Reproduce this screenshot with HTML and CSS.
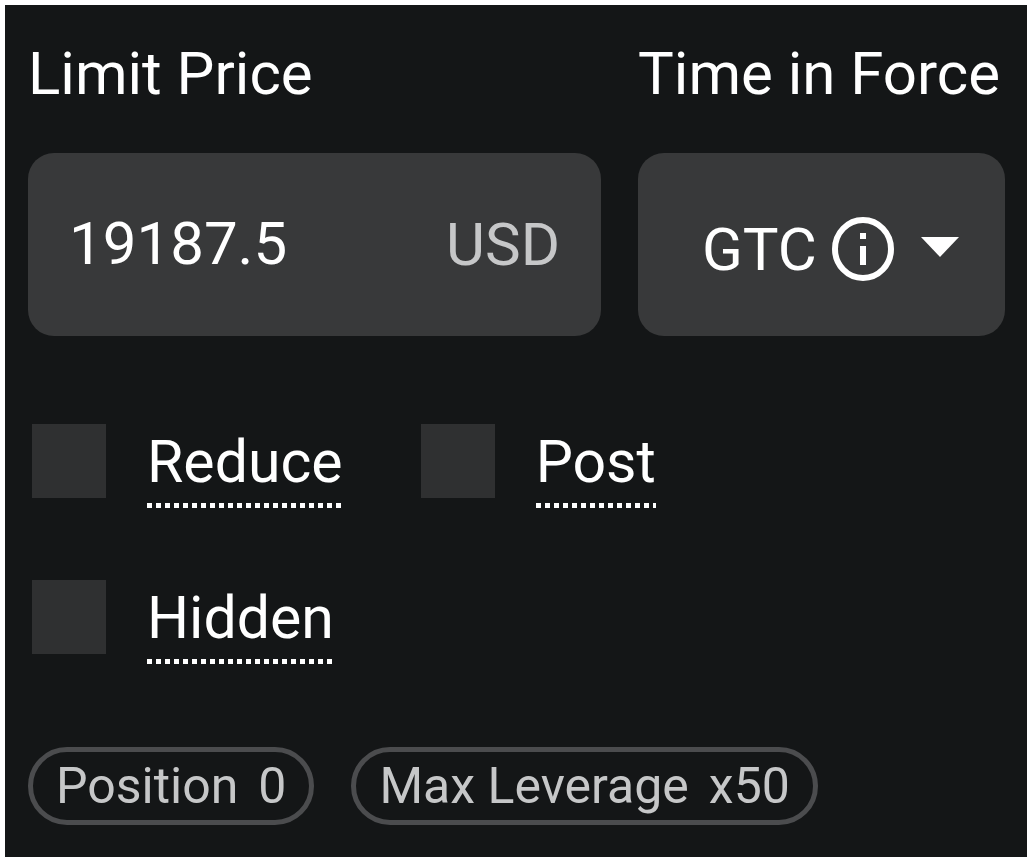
FILE: index.html
```
<!DOCTYPE html>
<html lang="en">
<head>
    <meta charset="UTF-8">
    <meta name="viewport" content="width=device-width, initial-scale=1.0">
    <title>Limit Order</title>
    <link rel="stylesheet" href="styles.css">
</head>
<body>

    <form class="order-panel">
        <div class="fields">
            <div class="field">
                <label for="price">Limit Price</label>
                <div class="field-box">
                    <input type="text" id="price" name="price" value="19187.5" inputmode="decimal">
                    <span class="unit">USD</span>
                </div>
            </div>

            <div class="field">
                <label for="tif">Time in Force</label>
                <div class="select-box">
                    <select id="tif" name="tif">
                        <option selected>GTC</option>
                        <option>IOC</option>
                        <option>FOK</option>
                    </select>
                    <div class="select-icons">
                        <svg class="info-icon" viewBox="0 0 62 64" aria-hidden="true">
                            <ellipse cx="31" cy="32" rx="28" ry="29" fill="none" stroke="#fff" stroke-width="6"/>
                            <path d="M28 16h6v6h-6zM28 29h6v19h-6z" fill="#fff"/>
                        </svg>
                        <svg class="arrow-icon" viewBox="0 0 38 20" aria-hidden="true">
                            <path d="M0 0h38L19 20z" fill="#fff"/>
                        </svg>
                    </div>
                </div>
            </div>
        </div>

        <div class="options">
            <div class="option">
                <input type="checkbox" id="reduce" name="reduce">
                <label for="reduce">Reduce</label>
            </div>
            <div class="option">
                <input type="checkbox" id="post" name="post">
                <label for="post">Post</label>
            </div>
            <div class="option">
                <input type="checkbox" id="hidden" name="hidden">
                <label for="hidden">Hidden</label>
            </div>
        </div>

        <div class="chips">
            <div class="chip"><span>Position</span><span>0</span></div>
            <div class="chip"><span>Max Leverage</span><span>x50</span></div>
        </div>
    </form>

</body>
</html>
```
FILE: styles.css
```
* {
    box-sizing: border-box;
}
body {
    margin: 5px;
    background-color: #fff;
    font-family: Roboto, sans-serif;
    font-size: 60px;
    line-height: 72px;
    color: #fff;
}
.order-panel {
    padding: 33px 22px 32px 23px;
    background-color: #141617;
}
.fields {
    display: grid;
    grid-template-columns: 573fr 367fr;
    gap: 37px;
}
.field {
    display: flex;
    flex-direction: column;
    gap: 43px;
    min-width: 0;
}
.field-box {
    display: flex;
    align-items: center;
    height: 183px;
    padding: 0 41px;
    background-color: #38393a;
    border-radius: 26px;
}
.field-box input {
    flex: 1;
    min-width: 0;
    padding: 0 0 2px;
    border: none;
    outline: none;
    background: none;
    font: inherit;
    color: #fff;
}
.unit {
    color: #c6c7c8;
}
.select-box {
    position: relative;
}
.select-box select {
    width: 100%;
    height: 183px;
    padding: 10px 180px 0 64px;
    border: none;
    border-radius: 26px;
    outline: none;
    appearance: none;
    background-color: #38393a;
    font: inherit;
    color: #fff;
}
.select-icons {
    position: absolute;
    top: 0;
    right: 46px;
    bottom: 0;
    display: flex;
    align-items: center;
    gap: 27px;
    padding-top: 8px;
    pointer-events: none;
}
.info-icon {
    width: 62px;
    height: 64px;
}
.arrow-icon {
    width: 38px;
    height: 20px;
    margin-bottom: 4px;
}
.options {
    display: flex;
    flex-wrap: wrap;
    gap: 72px 78px;
    margin-top: 88px;
    padding-left: 4px;
    font-size: 59px;
}
.option {
    display: flex;
    align-items: flex-start;
    gap: 41px;
}
.option input {
    width: 74px;
    height: 74px;
    margin: 0;
    appearance: none;
    background-color: #2f3031;
}
.option input:checked {
    background-color: #c6c7c8;
}
.option label {
    padding: 2px 0 10px;
    /* square dots, 5px wide with a 4px gap */
    background: repeating-linear-gradient(90deg, #fff 0 5px, transparent 5px 9px) bottom / 100% 5px no-repeat;
}
.chips {
    display: flex;
    flex-wrap: wrap;
    gap: 37px;
    margin-top: 83px;
}
.chip {
    display: flex;
    gap: 20px;
    padding: 3px 23px;
    border: 5px solid #4b4c4e;
    border-radius: 39px;
    font-size: 50px;
    line-height: 62px;
    color: #c6c7c8;
}
```
